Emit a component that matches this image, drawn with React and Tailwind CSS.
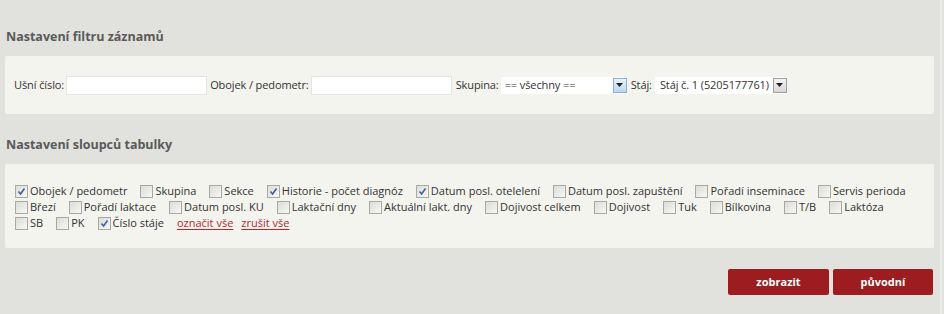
const rows = [
  [
    ["Obojek / pedometr", true],
    ["Skupina", false],
    ["Sekce", false],
    ["Historie - počet diagnóz", true],
    ["Datum posl. otelelení", true],
    ["Datum posl. zapuštění", false],
    ["Pořadí inseminace", false],
    ["Servis perioda", false],
  ],
  [
    ["Březí", false],
    ["Pořadí laktace", false],
    ["Datum posl. KU", false],
    ["Laktační dny", false],
    ["Aktuální lakt. dny", false],
    ["Dojivost celkem", false],
    ["Dojivost", false],
    ["Tuk", false],
    ["Bílkovina", false],
    ["T/B", false],
    ["Laktóza", false],
  ],
  [
    ["SB", false],
    ["PK", false],
    ["Číslo stáje", true],
  ],
];

function Check({ checked }) {
  return (
    <span className="inline-flex h-[13px] w-[13px] shrink-0 items-center justify-center border border-[#a9a9a4] bg-gradient-to-br from-[#dcdcd8] to-[#f7f7f5]">
      {checked && (
        <svg width="9" height="9" viewBox="0 0 9 9">
          <path d="M1.5 4.5 L3.6 7 L7.5 1.5" fill="none" stroke="#3a5fa8" strokeWidth="1.6" />
        </svg>
      )}
    </span>
  );
}

function Arrow({ blue }) {
  return (
    <span
      className={
        "flex h-[15px] w-[14px] shrink-0 items-center justify-center border " +
        (blue ? "border-[#8ab0d6] bg-gradient-to-b from-[#e8f2fb] to-[#bcd6ef]" : "border-[#a0a0a0] bg-gradient-to-b from-[#f4f4f4] to-[#d6d6d6]")
      }
    >
      <svg width="7" height="4" viewBox="0 0 7 4">
        <path d="M0 0 H7 L3.5 4 Z" fill="#222" />
      </svg>
    </span>
  );
}

export default function App() {
  return (
    <div className="flex h-[314px] w-[944px] bg-[#e1e1dd] font-['Open_Sans',sans-serif] text-[11px] text-[#333]">
      <div className="w-[940px] pl-[5px] pr-[6px]">
        <h2 className="pl-[1px] pt-[28px] text-[12.5px] font-bold leading-[18px] text-[#5a5a5a]">Nastavení filtru záznamů</h2>
        <div className="mt-[10px] flex h-[58px] items-center whitespace-nowrap rounded-[2px] bg-[#f4f4ef] pl-[9px] tracking-[-0.1px]">
          <span>Ušní číslo:</span>
          <span className="ml-[2px] h-[19px] w-[141px] shrink-0 border border-[#e4e4e0] bg-white" />
          <span className="ml-[3px]">Obojek / pedometr:</span>
          <span className="ml-[2px] h-[19px] w-[141px] shrink-0 border border-[#e4e4e0] bg-white" />
          <span className="ml-[4px]">Skupina:</span>
          <span className="ml-[2px] flex h-[17px] w-[126px] shrink-0 items-center justify-between bg-white pl-[4px]">
            <span>== všechny ==</span>
            <Arrow blue />
          </span>
          <span className="ml-[4px]">Stáj:</span>
          <span className="ml-[3px] flex h-[17px] items-center bg-white pl-[5px]">
            <span>Stáj č. 1 (5205177761)</span>
            <span className="ml-[4px]"><Arrow /></span>
          </span>
        </div>
        <h2 className="pl-[1px] pt-[22px] text-[12.5px] font-bold leading-[18px] text-[#5a5a5a]">Nastavení sloupců tabulky</h2>
        <div className="mt-[10px] h-[84px] rounded-[2px] bg-[#f4f4ef] pl-[10px] pt-[19px]">
          {rows.map((row, i) => (
            <div key={i} className="flex h-[16px] items-center whitespace-nowrap leading-[16px]">
              {row.map(([label, checked]) => (
                <label key={label} className="mr-[13px] flex shrink-0 items-center gap-[2px]">
                  <Check checked={checked} />
                  <span>{label}</span>
                </label>
              ))}
              {i === 2 && (
                <>
                  <a className="mr-[8px] text-[#b5272c] underline underline-offset-2">označit vše</a>
                  <a className="text-[#b5272c] underline underline-offset-2">zrušit vše</a>
                </>
              )}
            </div>
          ))}
        </div>
        <div className="mt-[21px] flex justify-end gap-[4px] pr-[1px]">
          <button className="h-[26px] w-[101px] rounded-[2px] bg-[#9c1c20] text-[11px] font-bold text-white">zobrazit</button>
          <button className="h-[26px] w-[100px] rounded-[2px] bg-[#9c1c20] text-[11px] font-bold text-white">původní</button>
        </div>
      </div>
      <div className="w-[2px] bg-[#ececea]" />
    </div>
  );
}
